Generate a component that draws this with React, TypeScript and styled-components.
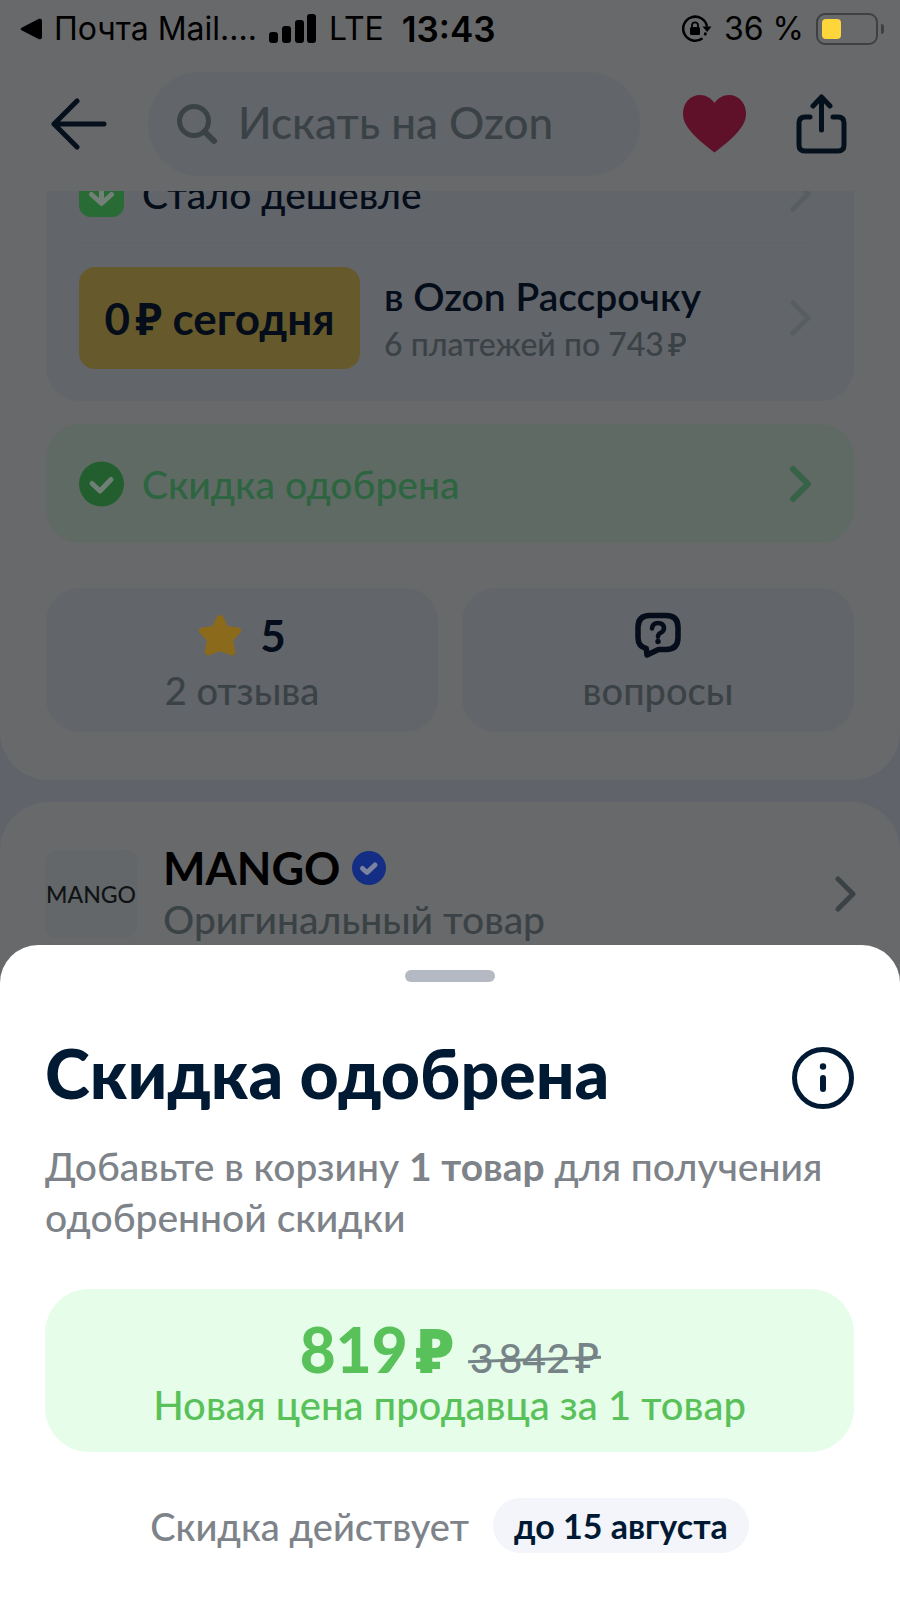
import React from "react";
import styled, { createGlobalStyle } from "styled-components";

const c = {
  surface: "#68696a",
  card: "#62656a",
  gap: "#606369",
  mintDim: "#5f6a64",
  ink: "#040d19",
  muted: "#3b4246",
  navy: "#001a34",
  grey: "#7d8389",
  green: "#59c159",
};

const GlobalStyle = createGlobalStyle`
  *, *::before, *::after { box-sizing: border-box; }
  body { margin: 0; background: ${c.surface}; }
  button, input { font: inherit; color: inherit; border: 0; padding: 0; background: none; }
  button { cursor: pointer; text-align: left; }
  h1, h2, p { margin: 0; }
  svg { display: block; flex: none; }
`;

const Screen = styled.div`
  position: relative;
  min-height: 100vh;
  overflow: hidden;
  background: ${c.surface};
  color: ${c.ink};
  font-family: Lato, "Noto Sans", sans-serif;
`;

const StatusBar = styled.div`
  display: flex;
  align-items: center;
  justify-content: space-between;
  height: 57px;
  padding: 0 16px 0 20px;
  color: #000;
  font-family: Inter, sans-serif;
  font-size: 32px;
  line-height: 40px;
  white-space: nowrap;
`;
const StatusGroup = styled.div`
  display: flex;
  align-items: center;
  gap: 12px;
`;
const Clock = styled.time`
  padding-left: 6px;
  font-size: 35px;
  font-weight: 600;
`;
const Battery = styled.span`
  display: flex;
  align-items: center;
  gap: 3px;
`;
const BatteryCase = styled.span`
  width: 62px;
  height: 32px;
  padding: 4px;
  border: 2px solid #3f4041;
  border-radius: 9px;
`;
const BatteryCharge = styled.span`
  display: block;
  width: 19px;
  height: 100%;
  border-radius: 4px;
  background: #ffd53c;
`;
const BatteryTip = styled.span`
  width: 3px;
  height: 10px;
  border-radius: 0 3px 3px 0;
  background: #3f4041;
`;

const Toolbar = styled.header`
  display: flex;
  align-items: center;
  height: 134px;
  padding: 0 53px 0 51px;
`;
const IconButton = styled.button`
  flex: none;
`;
const SearchField = styled.label`
  display: flex;
  flex: 1;
  align-items: center;
  gap: 20px;
  min-width: 0;
  height: 104px;
  margin: 0 43px 0 41px;
  padding: 0 28px;
  border-radius: 52px;
  background: ${c.card};
  color: ${c.muted};
`;
const SearchInput = styled.input`
  flex: 1;
  min-width: 0;
  padding-bottom: 4px;
  outline: 0;
  font-size: 44px;
  line-height: 56px;
  font-weight: 500;
  &::placeholder { color: ${c.muted}; opacity: 1; }
`;
const Actions = styled.div`
  display: flex;
  align-items: center;
  gap: 50px;
`;

const Page = styled.main`
  background: ${c.gap};
`;
const Section = styled.section<{ $last?: boolean }>`
  padding: ${(p) => (p.$last ? "41px 44px 400px 45px" : "0 46px 48px")};
  border-radius: ${(p) => (p.$last ? "48px 48px 0 0" : "0 0 48px 48px")};
  background: ${c.surface};
`;
const OfferCard = styled.div`
  padding: 0 43px 0 33px;
  border-radius: 0 0 34px 34px;
  background: ${c.card};
`;
const CheaperRow = styled.button`
  display: flex;
  align-items: flex-end;
  gap: 18px;
  width: 100%;
  height: 52px;
  padding-bottom: 25px;
  overflow: hidden;
  border-bottom: 1px solid #5f6368;
`;
const RowLabel = styled.span`
  flex: 1;
  font-size: 39px;
  line-height: 46px;
  font-weight: 500;
`;
const InstallmentRow = styled.button`
  display: flex;
  align-items: center;
  gap: 24px;
  width: 100%;
  padding: 24px 0 32px;
`;
const TodayBadge = styled.span`
  flex: none;
  width: 281px;
  border-radius: 16px;
  background: #665a2c;
  font-size: 44px;
  line-height: 102px;
  font-weight: 700;
  text-align: center;
`;
const InstallmentText = styled.span`
  display: flex;
  flex: 1;
  flex-direction: column;
  padding-top: 3px;
  font-size: 39px;
  line-height: 48px;
  font-weight: 600;
`;
const InstallmentNote = styled.small`
  color: ${c.muted};
  font-size: 32px;
  font-weight: 500;
`;
const ApprovedCard = styled.button`
  display: flex;
  align-items: center;
  gap: 18px;
  width: 100%;
  height: 119px;
  margin-top: 23px;
  padding: 0 43px 0 33px;
  border-radius: 34px;
  background: ${c.mintDim};
  color: #2d6540;
`;
const Stats = styled.div`
  display: grid;
  grid-template-columns: 1fr 1fr;
  gap: 24px;
  margin-top: 45px;
`;
const StatCard = styled.button`
  display: flex;
  flex-direction: column;
  align-items: center;
  gap: 9px;
  height: 144px;
  padding-top: 24px;
  border-radius: 34px;
  background: ${c.card};
`;
const StatValue = styled.span`
  display: flex;
  align-items: center;
  gap: 18px;
  height: 46px;
  font-size: 44px;
  line-height: 46px;
  font-weight: 700;
`;
const StatLabel = styled.span`
  color: ${c.muted};
  font-size: 38px;
  line-height: 46px;
  font-weight: 500;
`;

const SectionGap = styled.div`
  height: 22px;
`;
const SellerRow = styled.button`
  display: flex;
  align-items: center;
  width: 100%;
`;
const SellerLogo = styled.span`
  display: flex;
  align-items: center;
  justify-content: center;
  width: 92px;
  height: 88px;
  margin-right: 26px;
  border-radius: 12px;
  background: #636769;
  color: #101315;
  font-size: 23px;
  font-weight: 500;
`;
const SellerInfo = styled.span`
  display: flex;
  flex: 1;
  flex-direction: column;
`;
const SellerName = styled.span`
  display: flex;
  align-items: center;
  gap: 12px;
  color: #000;
  font-size: 45px;
  line-height: 50px;
  font-weight: 700;
`;
const SellerNote = styled.span`
  color: ${c.muted};
  font-size: 39px;
  line-height: 52px;
  font-weight: 500;
`;

const Sheet = styled.section`
  position: absolute;
  right: 0;
  bottom: 0;
  left: 0;
  padding: 25px 46px 45px 45px;
  border-radius: 38px 38px 0 0;
  background: #fff;
`;
const Handle = styled.div`
  width: 90px;
  height: 12px;
  margin: 0 auto;
  border-radius: 6px;
  background: #b5b9c4;
`;
const SheetHeader = styled.div`
  display: flex;
  align-items: flex-end;
  justify-content: space-between;
  margin-top: 55px;
  color: ${c.navy};
`;
const SheetTitle = styled.h1`
  font-size: 68px;
  line-height: 72px;
  font-weight: 900;
`;
const SheetText = styled.p`
  margin-top: 32px;
  color: ${c.grey};
  font-size: 39px;
  line-height: 51px;
  font-weight: 500;
`;
const PriceCard = styled.div`
  display: flex;
  flex-direction: column;
  align-items: center;
  margin-top: 46px;
  padding: 28px 0 23px;
  border-radius: 44px;
  background: #e6fdea;
  color: ${c.green};
`;
const Prices = styled.div`
  display: flex;
  align-items: baseline;
  gap: 15px;
  height: 64px;
  line-height: 64px;
`;
const NewPrice = styled.strong`
  font-size: 62px;
  font-weight: 900;
`;
const OldPrice = styled.s`
  position: relative;
  color: #768487;
  font-size: 41px;
  line-height: 48px;
  font-weight: 500;
  text-decoration: none;
  &::after {
    content: "";
    position: absolute;
    top: 50%;
    right: -2px;
    left: -2px;
    height: 3px;
    background: currentColor;
    transform: rotate(-2deg);
  }
`;
const PriceNote = styled.p`
  font-size: 40px;
  line-height: 48px;
  font-weight: 500;
`;
const Validity = styled.p`
  display: flex;
  align-items: center;
  justify-content: center;
  gap: 24px;
  margin-top: 46px;
  color: ${c.grey};
  font-size: 38px;
  font-weight: 500;
`;
const DatePill = styled.span`
  padding: 0 21px;
  border-radius: 28px;
  background: #f3f5fa;
  color: ${c.navy};
  font-size: 34px;
  line-height: 55px;
  font-weight: 700;
`;

const Chevron = ({ color, bold }: { color: string; bold?: boolean }) => (
  <svg width="21" height="46" viewBox="0 0 21 46" fill="none" stroke={color} strokeWidth={bold ? 6 : 5} strokeLinecap="round" strokeLinejoin="round">
    <path d="M3 8l15 15L3 38" />
  </svg>
);

export default function App() {
  return (
    <Screen>
      <GlobalStyle />
      <StatusBar>
        <StatusGroup>
          <svg width="22" height="22" viewBox="0 0 22 22"><path d="M2 9.500L19 .8Q22 0 22 3v16q0 3-3 2.200L2 12.500Q-.8 11 2 9.500z" /></svg>
          <span>Почта Mail....</span>
          <svg width="48" height="30" viewBox="0 0 48 30">
            <rect x="0" y="18" width="9" height="11" rx="3" />
            <rect x="13" y="12" width="9" height="17" rx="3" />
            <rect x="26" y="6" width="9" height="23" rx="3" />
            <rect x="38" y="0" width="9" height="29" rx="3" />
          </svg>
          <span>LTE</span>
          <Clock>13:43</Clock>
        </StatusGroup>
        <StatusGroup>
          <svg width="30" height="28" viewBox="0 0 30 28" fill="none" stroke="#000" strokeWidth="2.500">
            <path d="M20.500 23.200A12 12 0 1 1 25 11.500" />
            <path d="M20.500 11.500h9L25.200 17z" fill="#000" stroke="none" />
            <path d="M23.800 17.500l-1 2.800" />
            <rect x="8" y="12" width="10" height="8" rx="1.500" fill="#000" stroke="none" />
            <path d="M10 12.500v-2.200a3 3 0 0 1 6 0v2.200" strokeWidth="1.800" />
          </svg>
          <span>36 %</span>
          <Battery>
            <BatteryCase><BatteryCharge /></BatteryCase>
            <BatteryTip />
          </Battery>
        </StatusGroup>
      </StatusBar>

      <Toolbar>
        <IconButton aria-label="Назад">
          <svg width="56" height="52" viewBox="0 0 56 52" fill="none" stroke="#06101d" strokeWidth="5" strokeLinecap="round" strokeLinejoin="round">
            <path d="M26 3L3 26l23 23M3 26h50" />
          </svg>
        </IconButton>
        <SearchField>
          <svg width="42" height="42" viewBox="0 0 42 42" fill="none" stroke="#3b4246" strokeWidth="5" strokeLinecap="round">
            <circle cx="18" cy="18" r="14.500" />
            <path d="M29 29l9 9" strokeWidth="6" />
          </svg>
          <SearchInput type="search" placeholder="Искать на Ozon" />
        </SearchField>
        <Actions>
          <IconButton aria-label="В избранное">
            <svg width="63" height="58" viewBox="0 0 63 58" fill="#5e1129">
              <path d="M31.500 57.500C25 52 15 45.500 7.500 36 2.500 30 0 25 0 18.500 0 8 7.500 0 17 0c6 0 11 3 14.500 8C35 3 40 0 46 0c9.500 0 17 8 17 18.500C63 25 60.500 30 55.500 36 48 45.500 38 52 31.500 57.500z" />
            </svg>
          </IconButton>
          <IconButton aria-label="Поделиться">
            <svg width="51" height="60" viewBox="0 0 51 60" fill="none" stroke="#04101c" strokeWidth="5" strokeLinecap="round" strokeLinejoin="round">
              <path d="M14 23H9q-6 0-6 6v22q0 6 6 6h33q6 0 6-6V29q0-6-6-6h-5" />
              <path d="M25.500 36V4M17 12l8.500-9 8.500 9" />
            </svg>
          </IconButton>
        </Actions>
      </Toolbar>

      <Page>
        <Section>
          <OfferCard>
            <CheaperRow>
              <svg width="45" height="46" viewBox="0 0 45 46" fill="none">
                <rect width="45" height="46" rx="12" fill="#286b35" />
                <path d="M22.500 12v20M12.500 23.500l10 9 10-9" stroke="#728078" strokeWidth="5" strokeLinecap="round" strokeLinejoin="round" />
              </svg>
              <RowLabel>Стало дешевле</RowLabel>
              <Chevron color="#585d61" />
            </CheaperRow>
            <InstallmentRow>
              <TodayBadge>0&#8201;₽ сегодня</TodayBadge>
              <InstallmentText>
                в Ozon Рассрочку
                <InstallmentNote>6 платежей по 743&#8201;₽</InstallmentNote>
              </InstallmentText>
              <Chevron color="#585d61" />
            </InstallmentRow>
          </OfferCard>

          <ApprovedCard>
            <svg width="45" height="46" viewBox="0 0 45 46" fill="none">
              <circle cx="22.500" cy="23" r="22.500" fill="#235f2e" />
              <path d="M13 22.500l8 7.500 11-11.500" stroke="#707f75" strokeWidth="5" strokeLinecap="round" strokeLinejoin="round" />
            </svg>
            <RowLabel>Скидка одобрена</RowLabel>
            <Chevron color="#366248" bold />
          </ApprovedCard>

          <Stats>
            <StatCard>
              <StatValue>
                <svg width="44" height="42" viewBox="0 0 44 42" fill="#8c6a1b" stroke="#8c6a1b" strokeWidth="3" strokeLinejoin="round">
                  <path d="M22 2.500q1.500 0 2.200 1.500l4.300 9.500 12 1.500q2 1 .8 2.800L33.500 26l2.300 12q-.3 2.500-2.800 1.700L22 35.500l-11 4.200q-2.500.8-2.800-1.700L10.500 26 2.700 17.800Q1.500 16 3.500 15l12-1.500L19.800 4q.7-1.500 2.200-1.500z" />
                </svg>
                5
              </StatValue>
              <StatLabel>2 отзыва</StatLabel>
            </StatCard>
            <StatCard>
              <StatValue>
                <svg width="46" height="46" viewBox="0 0 46 46" fill="none" stroke="#040d19" strokeWidth="5.500" strokeLinecap="round" strokeLinejoin="round">
                  <path d="M15 3.500h16q12 0 12 12v10q0 12-12 12h-7.500L12 43l-.7-6.500Q3 34.500 3 25.500v-10q0-12 12-12z" />
                  <path d="M17 16.500q.5-5.500 6-5.500t6 5q0 3.200-3.200 4.700-2.800 1.200-2.800 4" strokeWidth="4.500" />
                  <circle cx="23" cy="29.500" r="2.700" fill="#040d19" stroke="none" />
                </svg>
              </StatValue>
              <StatLabel>вопросы</StatLabel>
            </StatCard>
          </Stats>
        </Section>

        <SectionGap />

        <Section $last>
          <SellerRow>
            <SellerLogo>MANGO</SellerLogo>
            <SellerInfo>
              <SellerName>
                MANGO
                <svg width="34" height="34" viewBox="0 0 34 34" fill="none">
                  <circle cx="17" cy="17" r="17" fill="#142e85" />
                  <path d="M10.500 17.500l4.500 4 8-7.500" stroke="#7b83a0" strokeWidth="5" strokeLinecap="round" strokeLinejoin="round" />
                </svg>
              </SellerName>
              <SellerNote>Оригинальный товар</SellerNote>
            </SellerInfo>
            <Chevron color="#3b4246" />
          </SellerRow>
        </Section>
      </Page>

      <Sheet role="dialog" aria-labelledby="sheet-title">
        <Handle />
        <SheetHeader>
          <SheetTitle id="sheet-title">Скидка одобрена</SheetTitle>
          <IconButton aria-label="Подробнее">
            <svg width="62" height="62" viewBox="0 0 62 62" fill="none" stroke="#001a34" strokeLinecap="round">
              <circle cx="31" cy="31" r="28.500" strokeWidth="5" />
              <path d="M31 31v11" strokeWidth="6" />
              <circle cx="31" cy="19.500" r="3.200" fill="#001a34" stroke="none" />
            </svg>
          </IconButton>
        </SheetHeader>
        <SheetText>
          Добавьте в корзину <b>1 товар</b> для получения одобренной скидки
        </SheetText>
        <PriceCard>
          <Prices>
            <NewPrice>819&#8201;₽</NewPrice>
            <OldPrice>3&#8201;842&#8201;₽</OldPrice>
          </Prices>
          <PriceNote>Новая цена продавца за 1 товар</PriceNote>
        </PriceCard>
        <Validity>
          Скидка действует <DatePill>до 15 августа</DatePill>
        </Validity>
      </Sheet>
    </Screen>
  );
}
